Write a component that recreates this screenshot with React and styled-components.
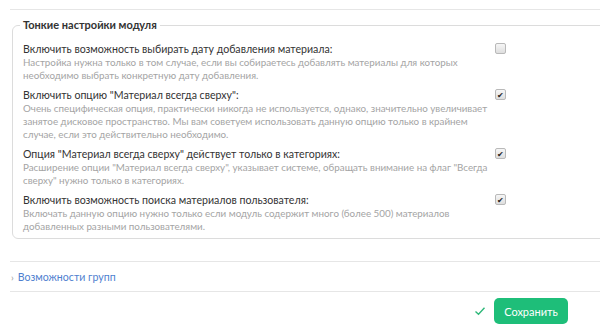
import React from 'react';
import styled, { createGlobalStyle } from 'styled-components';

const GlobalStyle = createGlobalStyle`
  html, body {
    margin: 0;
    overflow: hidden;
    background: #fff;
  }
  body {
    font-family: Lato, "Noto Sans", sans-serif;
    color: #333;
  }
`;

const Page = styled.div`
  width: 640px;
  padding: 9px 0 0 10px;
`;

const TopRule = styled.div`
  border-top: 1px solid #e6e6e6;
`;

const Fieldset = styled.fieldset`
  margin: 8px 0 0 2px;
  padding: 4px 10px 5px 10px;
  border: 1px solid #dcdcdc;
  border-radius: 6px;
`;

const Legend = styled.legend`
  padding: 0 3px;
  margin-left: -3px;
  font-size: 11px;
  line-height: 14px;
  font-weight: bold;
  color: #333;
`;

const Row = styled.div`
  display: grid;
  grid-template-columns: 472px auto;
  align-items: start;
  margin-top: 7px;
`;

const Title = styled.div`
  font-size: 10.6px;
  line-height: 13px;
  color: #333;
`;

const Hint = styled.div`
  font-size: 9.8px;
  line-height: 13px;
  color: #a4a4a4;
`;

const Box = styled.span`
  display: flex;
  align-items: center;
  justify-content: center;
  width: 9px;
  height: 9px;
  border: 1px solid #b9b9b9;
  border-radius: 2px;
  background: linear-gradient(#f6f6f6, #dedede);
  font-size: 8px;
  line-height: 1;
  color: #222;
`;

const Groups = styled.div`
  margin-top: 22px;
  height: 29px;
  border-top: 1px solid #e6e6e6;
  border-bottom: 1px solid #e6e6e6;
  display: flex;
  align-items: center;
  gap: 4px;
  font-size: 10.6px;
  color: #4f7fcf;
`;

const Chevron = styled.span`
  color: #999;
  font-size: 10px;
  padding-left: 1px;
`;

const Footer = styled.div`
  display: flex;
  justify-content: flex-end;
  align-items: center;
  gap: 8px;
  margin-top: 6px;
  width: 558px;
`;

const SaveButton = styled.button`
  width: 74px;
  height: 26px;
  border: 0;
  border-radius: 5px;
  background: #1ebe79;
  color: #fff;
  font-family: inherit;
  font-size: 11px;
`;

const options = [
  {
    title: 'Включить возможность выбирать дату добавления материала:',
    hint: 'Настройка нужна только в том случае, если вы собираетесь добавлять материалы для которых необходимо выбрать конкретную дату добавления.',
    checked: false,
  },
  {
    title: 'Включить опцию "Материал всегда сверху":',
    hint: 'Очень специфическая опция, практически никогда не используется, однако, значительно увеличивает занятое дисковое пространство. Мы вам советуем использовать данную опцию только в крайнем случае, если это действительно необходимо.',
    checked: true,
  },
  {
    title: 'Опция "Материал всегда сверху" действует только в категориях:',
    hint: 'Расширение опции "Материал всегда сверху", указывает системе, обращать внимание на флаг "Всегда сверху" нужно только в категориях.',
    checked: true,
  },
  {
    title: 'Включить возможность поиска материалов пользователя:',
    hint: 'Включать данную опцию нужно только если модуль содержит много (более 500) материалов добавленных разными пользователями.',
    checked: true,
  },
];

const CheckMark = () => (
  <svg width="12" height="10" viewBox="0 0 12 10">
    <path d="M1.5 5.5 L4.5 8.2 L10.5 1.8" fill="none" stroke="#2fb87a" strokeWidth="1.4" />
  </svg>
);

export default function App() {
  return (
    <Page>
      <GlobalStyle />
      <TopRule />
      <Fieldset>
        <Legend>Тонкие настройки модуля</Legend>
        {options.map(({ title, hint, checked }) => (
          <Row key={title}>
            <div>
              <Title>{title}</Title>
              <Hint>{hint}</Hint>
            </div>
            <Box>{checked ? '✔' : ''}</Box>
          </Row>
        ))}
      </Fieldset>
      <Groups>
        <Chevron>›</Chevron>
        Возможности групп
      </Groups>
      <Footer>
        <CheckMark />
        <SaveButton>Сохранить</SaveButton>
      </Footer>
    </Page>
  );
}
